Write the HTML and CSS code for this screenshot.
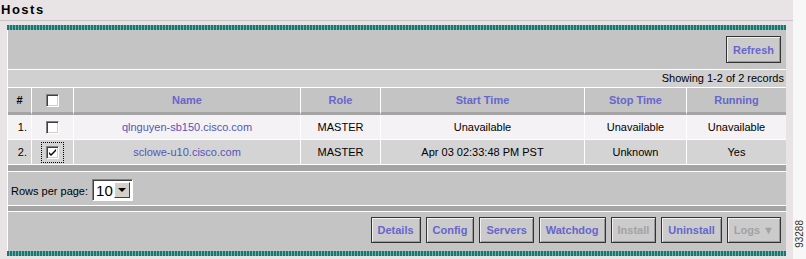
FILE: index.html
```html
<!DOCTYPE html>
<html lang="en">
<head>
    <meta charset="UTF-8">
    <title>Hosts</title>
    <link rel="stylesheet" href="styles.css">
</head>
<body>
    <div class="page">
        <h1 class="title">Hosts</h1>
        <div class="panel">
            <div class="stripe"></div>
            <div class="panel-body">
                <div class="toolbar-top">
                    <button type="button" class="btn btn-tall">Refresh</button>
                </div>
                <div class="count">Showing 1-2 of 2 records</div>

                <table class="hosts">
                    <thead>
                        <tr>
                            <th class="c-num">#</th>
                            <th class="c-cb"><span class="cb"></span></th>
                            <th class="c-name">Name</th>
                            <th class="c-role">Role</th>
                            <th class="c-start">Start Time</th>
                            <th class="c-stop">Stop Time</th>
                            <th class="c-run">Running</th>
                        </tr>
                    </thead>
                    <tbody>
                        <tr class="row-odd">
                            <td class="num">1.</td>
                            <td><span class="cb"></span></td>
                            <td><a href="#" class="host">qlnguyen-sb150.cisco.com</a></td>
                            <td>MASTER</td>
                            <td>Unavailable</td>
                            <td>Unavailable</td>
                            <td>Unavailable</td>
                        </tr>
                        <tr class="row-even">
                            <td class="num">2.</td>
                            <td><span class="focus"><span class="cb checked"><svg width="9" height="9" viewBox="0 0 9 9"><path d="M1 4 L3 6 L8 1 L8 3 L3 8 L1 6 Z" fill="#000"/></svg></span></span></td>
                            <td><a href="#" class="host">sclowe-u10.cisco.com</a></td>
                            <td>MASTER</td>
                            <td>Apr 03 02:33:48 PM PST</td>
                            <td>Unknown</td>
                            <td>Yes</td>
                        </tr>
                    </tbody>
                </table>

                <div class="bar bar-thick"></div>
                <div class="pager">
                    <span>Rows per page:</span>
                    <span class="select">
                        <span class="select-value">10</span>
                        <span class="select-arrow"></span>
                    </span>
                </div>
                <div class="bar"></div>

                <div class="toolbar-bottom">
                    <button type="button" class="btn">Details</button>
                    <button type="button" class="btn">Config</button>
                    <button type="button" class="btn">Servers</button>
                    <button type="button" class="btn">Watchdog</button>
                    <button type="button" class="btn" disabled>Install</button>
                    <button type="button" class="btn">Uninstall</button>
                    <button type="button" class="btn btn-logs" disabled>Logs &#9660;</button>
                </div>
            </div>
            <div class="stripe"></div>
        </div>
    </div>
    <div class="margin">
        <span class="fig">93288</span>
    </div>
</body>
</html>
```

FILE: styles.css
```css
body {
    margin: 0;
    display: flex;
    height: 259px;
    overflow: hidden;
    font-family: "Liberation Sans", Arial, sans-serif;
    font-size: 11px;
    color: #000;
    background: #f7f7f7;
}

.page {
    width: 793px;
    background: #e8e4e6;
}

.title {
    margin: 0;
    height: 21px;
    box-sizing: border-box;
    padding: 3px 0 0 1px;
    font-size: 13px;
    line-height: 13px;
    font-weight: bold;
    letter-spacing: 1.5px;
    border-bottom: 1px solid #c9c5c7;
}

.panel {
    margin: 4px 0 0 7px;
    width: 779px;
}

.stripe {
    height: 5px;
    background: repeating-linear-gradient(90deg, #1a7670 0 2px, #6fb3ae 2px 3px);
}

.panel-body {
    border-left: 1px solid #fff;
    background: #c4c4c4;
}

.toolbar-top {
    height: 40px;
    box-sizing: border-box;
    padding: 6px 5px 0 0;
    text-align: right;
    border-bottom: 1px solid #fff;
}

.count {
    height: 17px;
    line-height: 17px;
    padding-right: 2px;
    text-align: right;
    background: #d0d0d0;
    border-bottom: 1px solid #fff;
}

/* botoes */
.btn {
    height: 26px;
    padding: 0 6px;
    margin: 0;
    font-family: "Liberation Sans", Arial, sans-serif;
    font-size: 11px;
    font-weight: bold;
    color: #6666cc;
    background: #cbcbcb;
    border: 1px solid #333;
    box-shadow: inset 1px 1px #f0f0f0, inset -1px -1px #9a9a9a;
    cursor: pointer;
}

.btn-tall {
    height: 27px;
}

.btn:disabled {
    color: #a2a2a2;
    cursor: default;
}

.btn-logs {
    padding: 0 6px;
}

/* tabela */
.hosts {
    width: 778px;
    table-layout: fixed;
    border-collapse: separate;
    border-spacing: 0;
}

.hosts th,
.hosts td {
    box-sizing: border-box;
    padding: 0;
    text-align: center;
    vertical-align: middle;
    border-left: 1px solid #fff;
}

.hosts th:first-child,
.hosts td:first-child {
    border-left: none;
}

.hosts th {
    height: 27px;
    font-weight: bold;
    color: #6666cc;
    background: #c4c4c4;
    border-bottom: 3px solid #a4a4a4;
}

.hosts td {
    height: 25px;
    border-bottom: 1px solid #fff;
}

.c-num { width: 23px; }
.c-cb { width: 42px; }
.c-name { width: 227px; }
.c-role { width: 80px; }
.c-start { width: 204px; }
.c-stop { width: 102px; }
.c-run { width: 100px; }

.hosts th.c-num {
    color: #000;
}

.hosts td.num {
    text-align: right;
    padding-right: 4px;
}

.row-odd td {
    background: #f4f2f4;
}

.row-even td {
    background: #d4d4d4;
}

.host {
    color: #5555b8;
    text-decoration: none;
}

/* checkbox estilo windows */
.cb {
    display: inline-block;
    width: 13px;
    height: 13px;
    box-sizing: border-box;
    vertical-align: middle;
    background: #fff;
    border: 1px solid;
    border-color: #808080 #fff #fff #808080;
    box-shadow: inset 1px 1px #404040, inset -1px -1px #d4d0c8;
}

.cb svg {
    display: block;
    margin: 1px 0 0 1px;
}

.focus {
    display: inline-block;
    padding: 3px 4px;
    border: 1px dotted #000;
    line-height: 0;
    vertical-align: middle;
}

.bar {
    height: 5px;
    background: #a4a4a4;
    border-bottom: 1px solid #fff;
}

.bar-thick {
    height: 6px;
}

.pager {
    height: 34px;
    box-sizing: border-box;
    display: flex;
    align-items: center;
    padding: 4px 0 0 3px;
    border-bottom: 1px solid #fff;
}

.select {
    display: flex;
    margin-left: 4px;
    margin-top: -2px;
    width: 41px;
    height: 22px;
    box-sizing: border-box;
    background: #fff;
    border: 1px solid;
    border-color: #808080 #fff #fff #808080;
    box-shadow: inset 1px 1px #404040;
    padding: 2px 2px 2px 1px;
}

.select-value {
    flex: 1;
    font-size: 15px;
    line-height: 17px;
    padding-left: 2px;
}

.select-arrow {
    width: 16px;
    box-sizing: border-box;
    background: #d4d0c8;
    border: 1px solid;
    border-color: #fff #404040 #404040 #fff;
    display: flex;
    align-items: center;
    justify-content: center;
}

.select-arrow::after {
    content: "";
    border-left: 4px solid transparent;
    border-right: 4px solid transparent;
    border-top: 4px solid #000;
}

.toolbar-bottom {
    height: 39px;
    box-sizing: border-box;
    padding: 5px 5px 0 0;
    display: flex;
    justify-content: flex-end;
    align-items: flex-start;
    gap: 5px;
}

/* numero da figura */
.margin {
    flex: 1;
    display: flex;
    justify-content: center;
    align-items: flex-end;
    padding-bottom: 11px;
}

.fig {
    writing-mode: vertical-rl;
    transform: rotate(180deg);
    font-size: 10px;
    color: #333;
}
```
